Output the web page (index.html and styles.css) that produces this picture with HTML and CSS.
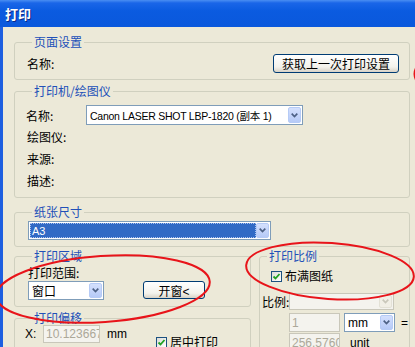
FILE: index.html
```html
<!DOCTYPE html>
<html lang="zh-CN">
<head>
    <meta charset="UTF-8">
    <title>打印</title>
    <link rel="stylesheet" href="styles.css">
</head>
<body>
    <div class="window">
        <div class="titlebar">打印</div>

        <div class="client">
            <fieldset class="group group-page">
                <legend>页面设置</legend>
                <div class="row row-page">
                    <span class="label">名称:</span>
                    <button class="btn btn-last">获取上一次打印设置</button>
                </div>
            </fieldset>

            <fieldset class="group group-printer">
                <legend>打印机/绘图仪</legend>
                <div class="row row-name">
                    <span class="label label-name">名称:</span>
                    <div class="combo combo-printer">
                        <span class="combo-text">Canon LASER SHOT LBP-1820 (副本 1)</span>
                        <span class="combo-arrow"><svg width="7" height="5" viewBox="0 0 7 5"><path d="M0.7 0.7 L3.5 3.5 L6.3 0.7" fill="none" stroke="#4d6185" stroke-width="1.7"/></svg></span>
                    </div>
                </div>
                <div class="row info">绘图仪:</div>
                <div class="row info">来源:</div>
                <div class="row info">描述:</div>
            </fieldset>

            <fieldset class="group group-paper">
                <legend>纸张尺寸</legend>
                <div class="combo combo-paper">
                    <span class="combo-text selected">A3</span>
                    <span class="combo-arrow"><svg width="7" height="5" viewBox="0 0 7 5"><path d="M0.7 0.7 L3.5 3.5 L6.3 0.7" fill="none" stroke="#4d6185" stroke-width="1.7"/></svg></span>
                </div>
            </fieldset>

            <div class="bottom">
                <div class="col-left">
                    <fieldset class="group group-area">
                        <legend>打印区域</legend>
                        <div class="area-label">打印范围:</div>
                        <div class="row row-area">
                            <div class="combo combo-area">
                                <span class="combo-text">窗口</span>
                                <span class="combo-arrow"><svg width="7" height="5" viewBox="0 0 7 5"><path d="M0.7 0.7 L3.5 3.5 L6.3 0.7" fill="none" stroke="#4d6185" stroke-width="1.7"/></svg></span>
                            </div>
                            <button class="btn btn-window">开窗&lt;</button>
                        </div>
                    </fieldset>

                    <fieldset class="group group-offset">
                        <legend>打印偏移</legend>
                        <div class="row row-offset">
                            <span class="label label-x">X:</span>
                            <span class="input disabled input-x">10.123667</span>
                            <span class="unit-mm">mm</span>
                            <label class="check check-center">
                                <span class="box"><svg width="9" height="9" viewBox="0 0 9 9"><path d="M1.5 4.5 L3.5 6.5 L7.5 2" fill="none" stroke="#21a121" stroke-width="1.8"/></svg></span>
                                居中打印
                            </label>
                        </div>
                    </fieldset>
                </div>

                <fieldset class="group group-scale">
                    <legend>打印比例</legend>
                    <label class="check check-fit">
                        <span class="box"><svg width="9" height="9" viewBox="0 0 9 9"><path d="M1.5 4.5 L3.5 6.5 L7.5 2" fill="none" stroke="#21a121" stroke-width="1.8"/></svg></span>
                        布满图纸
                    </label>
                    <div class="row row-ratio">
                        <span class="label label-ratio">比例:</span>
                        <div class="combo combo-ratio disabled">
                            <span class="combo-text"></span>
                            <span class="combo-arrow"><svg width="7" height="5" viewBox="0 0 7 5"><path d="M0.7 0.7 L3.5 3.5 L6.3 0.7" fill="none" stroke="#c9c7ba" stroke-width="1.7"/></svg></span>
                        </div>
                    </div>
                    <div class="row row-units">
                        <span class="input disabled input-num">1</span>
                        <div class="combo combo-mm">
                            <span class="combo-text">mm</span>
                            <span class="combo-arrow"><svg width="7" height="5" viewBox="0 0 7 5"><path d="M0.7 0.7 L3.5 3.5 L6.3 0.7" fill="none" stroke="#4d6185" stroke-width="1.7"/></svg></span>
                        </div>
                        <span class="equals">=</span>
                    </div>
                    <div class="row row-unit2">
                        <span class="input disabled input-num">256.5760</span>
                        <span class="unit-text">unit</span>
                    </div>
                </fieldset>
            </div>
        </div>

        <!-- red marks drawn over the dialog -->
        <svg class="marks" width="415" height="347" viewBox="0 0 415 347">
            <ellipse cx="103" cy="289" rx="107" ry="33" transform="rotate(-4 103 289)" fill="none" stroke="#e8141a" stroke-width="2"/>
            <ellipse cx="330" cy="271" rx="84" ry="28" transform="rotate(4 330 271)" fill="none" stroke="#e8141a" stroke-width="2"/>
            <path d="M416 68 Q413 74 416 80" fill="none" stroke="#e8141a" stroke-width="2"/>
        </svg>
    </div>
</body>
</html>
```

FILE: styles.css
```css
body {
    margin: 0;
    background: #ece9d8;
}
.window {
    position: relative;
    width: 415px;
    height: 347px;
    overflow: hidden;
    background: #ece9d8;
    font-family: "Liberation Sans", "Noto Sans CJK SC", sans-serif;
    font-size: 12px;
    color: #000;
}
.titlebar {
    height: 27px;
    box-sizing: border-box;
    padding-left: 5px;
    display: flex;
    align-items: center;
    color: #fff;
    font-family: "Noto Sans CJK SC", sans-serif;
    font-weight: bold;
    font-size: 13px;
    text-shadow: 1px 1px 0 #0a2a8a;
    background: linear-gradient(#4a8ef2 0, #1a66e8 3px, #0b5be0 40%, #0a58dc 100%);
}
.client {
    height: 320px;
    box-sizing: border-box;
    border-left: 3px solid #1d5fe0;
    padding: 8px 5px 0 11px;
}
.group {
    margin: 0;
    min-width: 0;
    border: 1px solid #d0d0bf;
    border-radius: 3px;
    padding: 0 10px 6px 12px;
}
.group legend {
    margin-left: 5px;
    padding: 0 2px;
    line-height: 14px;
    color: #2150b8;
    font-family: "Noto Sans CJK SC", sans-serif;
}
.row {
    display: flex;
    align-items: center;
}
.label,
.info,
.area-label,
.check {
    font-family: "Noto Sans CJK SC", sans-serif;
    white-space: nowrap;
}

/* 页面设置 */
.row-page {
    justify-content: space-between;
    padding-top: 5px;
}
.btn {
    font: inherit;
    font-family: "Noto Sans CJK SC", sans-serif;
    font-size: 12px;
    height: 19px;
    padding: 0;
    color: #000;
    border: 1px solid #003c74;
    border-radius: 3px;
    background: linear-gradient(#ffffff, #f3f2ec 70%, #d8d2c6);
}
.btn-last {
    width: 126px;
}

/* 打印机/绘图仪 */
.group-printer {
    margin-top: 4px;
}
.row-name {
    padding-top: 7px;
}
.label-name {
    width: 60px;
    margin-left: -1px;
}
.info {
    height: 22px;
}
.combo {
    display: flex;
    flex-shrink: 0;
    box-sizing: border-box;
    border: 1px solid #7f9db9;
    background: #fff;
    padding: 1px;
}
.combo-text {
    flex: 1;
    padding-left: 2px;
    white-space: nowrap;
    overflow: hidden;
    display: flex;
    align-items: center;
}
.combo-arrow {
    width: 13px;
    box-sizing: border-box;
    border: 1px solid #b6cbf6;
    border-radius: 2px;
    background: linear-gradient(#d4e0fd, #b6caf7);
    display: flex;
    align-items: center;
    justify-content: center;
}
.combo-printer {
    width: 217px;
    height: 20px;
    font-size: 10.5px;
    letter-spacing: -0.25px;
}

/* 纸张尺寸 */
.group-paper {
    margin-top: 7px;
    padding-top: 2px;
}
.combo-paper {
    width: 243px;
    height: 19px;
    margin-left: 1px;
    font-size: 11px;
}
.selected {
    background: #316ac5;
    color: #fff;
    outline: 1px dotted #a9c1ee;
    outline-offset: -1px;
}

/* 下半部分 */
.bottom {
    display: flex;
    gap: 8px;
    margin-top: 2px;
}
.col-left {
    width: 237px;
    flex-shrink: 0;
}
.area-label {
    margin-left: 1px;
    padding-top: 3px;
    line-height: 14px;
}
.row-area {
    margin-top: 1px;
    margin-left: 1px;
    align-items: flex-start;
}
.combo-area {
    width: 76px;
    height: 19px;
    font-family: "Noto Sans CJK SC", sans-serif;
}
.btn-window {
    width: 62px;
    height: 18px;
    margin-left: 39px;
    font-family: "Liberation Sans", "Noto Sans CJK SC", sans-serif;
}
.group-offset {
    margin-top: 4px;
    padding-bottom: 20px;
}
.row-offset {
    align-items: flex-start;
}
.label-x {
    margin-left: -2px;
    width: 18px;
    line-height: 18px;
    font-family: "Liberation Sans", sans-serif;
}
.input {
    flex-shrink: 0;
    box-sizing: border-box;
    border: 1px solid #7f9db9;
    background: #fff;
    padding-left: 2px;
    white-space: nowrap;
    overflow: hidden;
    display: flex;
    align-items: center;
}
.input.disabled {
    border-color: #c9c7ba;
    background: #f4f3ee;
    color: #aca899;
}
.input-x {
    width: 57px;
    height: 18px;
}
.unit-mm {
    margin-left: 7px;
    line-height: 18px;
}
.check {
    display: flex;
    align-items: center;
    gap: 3px;
    line-height: 14px;
}
.box {
    width: 11px;
    height: 11px;
    box-sizing: border-box;
    border: 1px solid #1c5180;
    background: linear-gradient(135deg, #dcdcd7, #ffffff);
    display: flex;
    align-items: center;
    justify-content: center;
}
.check-center {
    margin-left: 29px;
    margin-top: 10px;
}

/* 打印比例 */
.group-scale {
    flex: 1;
    padding: 0 4px 10px 2px;
}
.check-fit {
    margin-left: 9px;
    padding-top: 6px;
}
.row-ratio {
    margin-top: 10px;
}
.label-ratio {
    width: 27px;
    flex-shrink: 0;
}
.combo-ratio {
    width: 105px;
    height: 17px;
}
.combo.disabled {
    border-color: #c9c7ba;
    background: #f4f3ee;
}
.combo.disabled .combo-arrow {
    border-color: #e3e1d6;
    background: #f1efe6;
}
.row-units {
    margin-top: 3px;
    margin-left: 27px;
}
.input-num {
    width: 51px;
    height: 19px;
}
.combo-mm {
    width: 51px;
    height: 19px;
    margin-left: 4px;
}
.equals {
    margin-left: 6px;
}
.row-unit2 {
    margin-top: 1px;
    margin-left: 27px;
}
.unit-text {
    margin-left: 10px;
}

.marks {
    position: absolute;
    left: 0;
    top: 0;
    pointer-events: none;
}
```
